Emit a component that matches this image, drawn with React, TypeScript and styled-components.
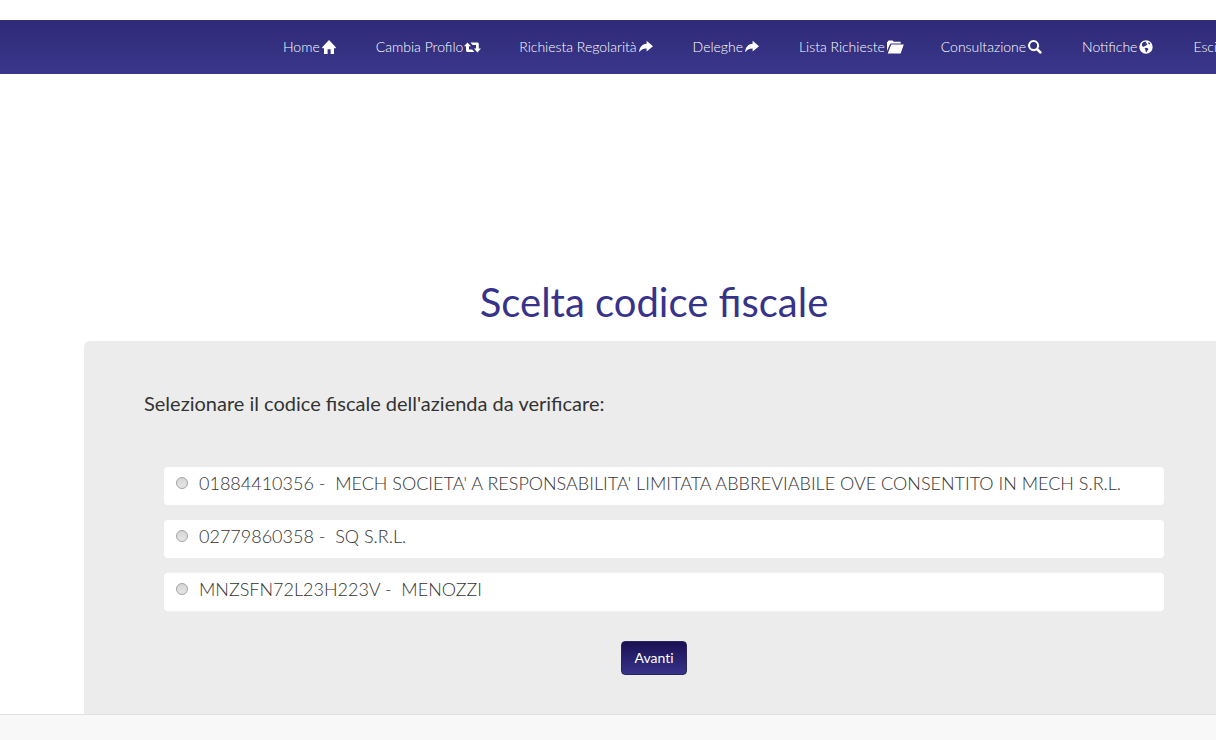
import React from "react";
import styled, { createGlobalStyle } from "styled-components";

const GlobalStyle = createGlobalStyle`
  *, *::before, *::after { box-sizing: border-box; }
  body {
    margin: 0;
    background: #fff;
    color: #333;
    font-family: Lato, "Liberation Sans", sans-serif;
    font-size: 14px;
    line-height: 20px;
  }
`;

const Page = styled.div`
  display: flex;
  flex-direction: column;
  min-height: 100vh;
  padding-top: 20px;
`;

const Navbar = styled.nav`
  padding-left: 283px;
  background: linear-gradient(#2f2b77, #3a368b);
`;

const NavList = styled.ul`
  display: flex;
  gap: 40px;
  margin: 0;
  padding: 0;
  list-style: none;
`;

const NavLink = styled.a`
  display: flex;
  align-items: center;
  gap: 2px;
  padding: 17px 0;
  color: #fff;
  font-weight: 300;
  text-decoration: none;
  white-space: nowrap;
`;

const Icon = styled.svg`
  flex: none;
  width: 14px;
  height: 14px;
  overflow: visible;
  fill: currentColor;
`;

const Main = styled.main`
  flex: 1;
  display: flex;
  flex-direction: column;
  margin-left: 84px;
  padding-top: 204px;
`;

const Title = styled.h1`
  margin: 0 0 15px;
  padding: 0 52px 0 60px;
  color: #37338a;
  font-size: 40px;
  font-weight: 400;
  line-height: 48px;
  text-align: center;
`;

const Panel = styled.form`
  flex: 1;
  padding: 47px 52px 39px 60px;
  border-radius: 6px 0 0 0;
  background: #ececec;
`;

const Choices = styled.fieldset`
  display: flex;
  flex-direction: column;
  gap: 15px;
  min-width: 0;
  margin: 0 0 30px;
  padding: 0 0 0 20px;
  border: 0;
`;

const Prompt = styled.legend`
  margin: 0 0 49px -20px;
  padding: 0;
  font-size: 20px;
  line-height: 30px;
`;

const Choice = styled.label`
  display: flex;
  align-items: flex-start;
  gap: 11px;
  min-height: 38px;
  padding: 4px 12px;
  border-radius: 4px;
  background: #fff;
  font-size: 18px;
  font-weight: 300;
  line-height: 24px;
`;

const Radio = styled.input`
  appearance: none;
  flex: none;
  width: 12px;
  height: 12px;
  margin: 6px 0 0;
  border: 1px solid #a3a3a3;
  border-radius: 50%;
  background: linear-gradient(#d6d6d6, #e6e6e6);
  &:checked { background: radial-gradient(#444 3px, #e0e0e0 4px); }
`;

const Actions = styled.div`
  display: flex;
  justify-content: center;
`;

const SubmitButton = styled.button`
  height: 34px;
  padding: 6px 12px;
  border: 1px solid #29265c;
  border-radius: 4px;
  background: linear-gradient(#1a1052, #37338a);
  color: #fff;
  font: inherit;
  font-variant-ligatures: none;
  cursor: pointer;
`;

const Footer = styled.footer`
  height: 26px;
  border-top: 1px solid #e0e0e0;
  background: #f8f8f8;
`;

const icons = {
  home: "M7 0 14 7.6 13.6 8.2H12V14H8.6V9.2H5.6V14H2V8.2H.4L0 7.6Z",
  retweet: "M2.5 2.6 6 6.3H4V9.6H7.2L9.4 12H2.4Q1 12 1 10.6V6.3H-1ZM5.4 2.6H12.4Q13.8 2.6 13.8 4V8.6H16L12.4 12.4 9 8.6H11V5H7.6Z",
  share: "M7.6 .8 14 6.2 7.6 11.4V8.5C4 8.4 1.8 9.8.2 12.2 .2 7.6 3 4.2 7.6 3.8Z",
  folder: "M0 11V2.6Q0 2 .8 1.8L1.2.8Q1.4.4 2 .4H5.4Q6 .4 6.2.9L6.6 1.7H13Q13.8 1.7 13.8 2.6V3.6H4Q3.2 3.6 2.9 4.3ZM4.2 4.6H16.8L13.8 13Q13.6 13.6 13 13.6H1.4Q.7 13.6 .9 13Z",
  search: "M5.6 0A5.6 5.6 0 1 0 8.5 10.4L11.7 13.6Q12.3 14.1 12.9 13.6L13.6 12.9Q14 12.3 13.5 11.7L10.3 8.6A5.6 5.6 0 0 0 5.6 0ZM5.6 2.1A3.5 3.5 0 1 1 5.6 9.1 3.5 3.5 0 0 1 5.6 2.1Z",
  globe: "M7 .3A6.7 6.7 0 1 0 7 13.7 6.7 6.7 0 0 0 7 .3ZM4.8 1.9 6.4 1.5 7.4 2.3 6.4 3.4 7.8 3.2 8.4 4.4 6.6 5.8 5.4 6 5.2 7 3.6 6.6 2.8 5 3.2 3.2ZM9.4 2 11.4 3.4 10.4 4.4 9.2 3.4ZM6.8 7.8 9 8.2 9.4 9.6 8.2 10.8 7.6 12.6 6.6 11.6 6.4 9.8 5.6 8.6Z",
};

type IconName = keyof typeof icons;

const Glyph = ({ name }: { name: IconName }) => (
  <Icon viewBox="0 0 14 14" aria-hidden="true">
    <path fillRule="evenodd" d={icons[name]} />
  </Icon>
);

const links: { label: string; icon?: IconName }[] = [
  { label: "Home", icon: "home" },
  { label: "Cambia Profilo", icon: "retweet" },
  { label: "Richiesta Regolarità", icon: "share" },
  { label: "Deleghe", icon: "share" },
  { label: "Lista Richieste", icon: "folder" },
  { label: "Consultazione", icon: "search" },
  { label: "Notifiche", icon: "globe" },
  { label: "Esci" },
];

const companies = [
  {
    code: "01884410356",
    name: "MECH SOCIETA' A RESPONSABILITA' LIMITATA ABBREVIABILE OVE CONSENTITO IN MECH S.R.L.",
  },
  { code: "02779860358", name: "SQ S.R.L." },
  { code: "MNZSFN72L23H223V", name: "MENOZZI" },
];

export default function App() {
  return (
    <>
      <GlobalStyle />
      <Page>
        <Navbar>
          <NavList>
            {links.map(({ label, icon }) => (
              <li key={label}>
                <NavLink href="#">
                  {label}
                  {icon && <Glyph name={icon} />}
                </NavLink>
              </li>
            ))}
          </NavList>
        </Navbar>
        <Main>
          <Title>Scelta codice fiscale</Title>
          <Panel onSubmit={(e) => e.preventDefault()}>
            <Choices>
              <Prompt>Selezionare il codice fiscale dell'azienda da verificare:</Prompt>
              {companies.map(({ code, name }) => (
                <Choice key={code}>
                  <Radio type="radio" name="company" value={code} />
                  <span>{`${code} -\u00a0 ${name}`}</span>
                </Choice>
              ))}
            </Choices>
            <Actions>
              <SubmitButton type="submit">Avanti</SubmitButton>
            </Actions>
          </Panel>
        </Main>
        <Footer />
      </Page>
    </>
  );
}
